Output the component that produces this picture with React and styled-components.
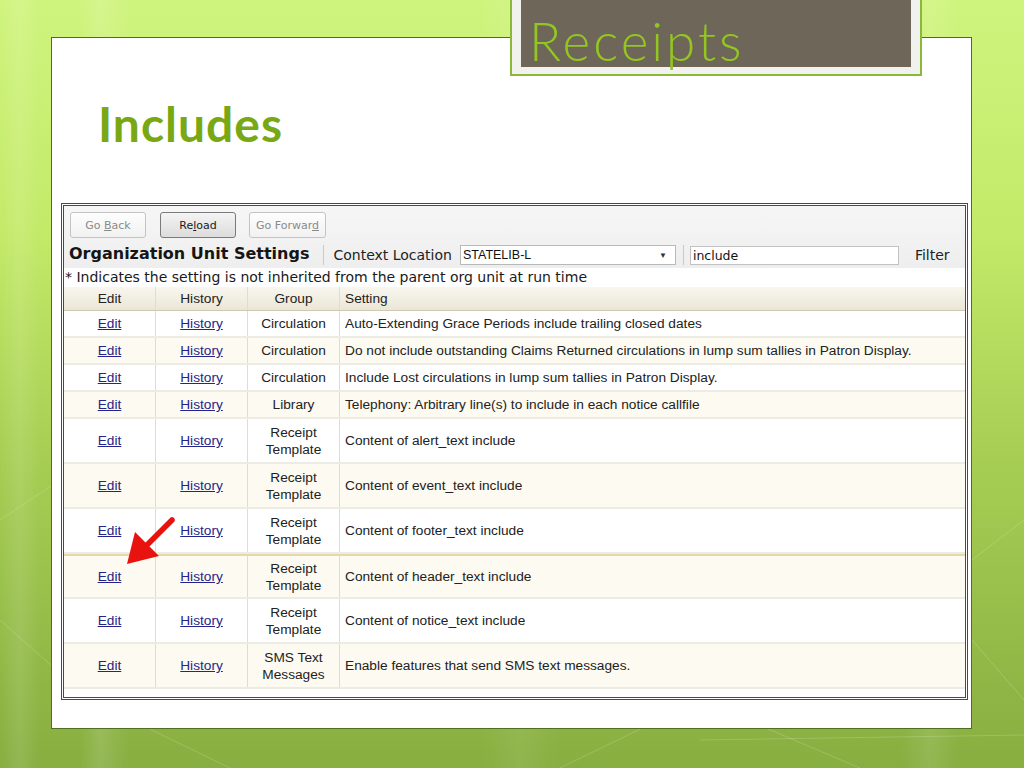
import React from "react";
import styled, { createGlobalStyle } from "styled-components";

const GlobalStyle = createGlobalStyle`
  html, body {
    margin: 0;
    padding: 0;
    overflow: hidden;
  }
  body {
    font-family: "Liberation Sans", Arial, sans-serif;
  }
`;

const Slide = styled.div`
  position: relative;
  width: 1024px;
  height: 768px;
  overflow: hidden;
  padding: 37px 0 0 51px;
  box-sizing: border-box;
  background:
    linear-gradient(90deg,
      rgba(255,255,255,0) 0px, rgba(255,255,255,0.10) 20px, rgba(255,255,255,0) 40px,
      rgba(255,255,255,0) 80px, rgba(255,255,255,0.12) 100px, rgba(255,255,255,0) 130px,
      rgba(255,255,255,0) 480px, rgba(255,255,255,0.08) 520px, rgba(255,255,255,0) 560px,
      rgba(255,255,255,0) 900px, rgba(255,255,255,0.10) 930px, rgba(255,255,255,0) 960px),
    linear-gradient(180deg, #cff47e 0%, #c3ea68 30%, #a5cc52 62%, #87ae40 100%);
`;

const Deco = styled.svg`
  position: absolute;
  left: 0;
  top: 0;
  pointer-events: none;
`;

const TitleTab = styled.div`
  position: absolute;
  left: 510px;
  top: 0;
  width: 412px;
  box-sizing: border-box;
  border: 2px solid #8cb83a;
  border-top: none;
  background: #f1f1ee;
  padding: 0 9px 7px 9px;
  z-index: 2;
`;

const TitleInner = styled.div`
  background: #6e6659;
  height: 67px;
  box-sizing: border-box;
  padding: 15px 0 0 8px;
`;

const TitleText = styled.div`
  font-family: Lato, "Open Sans", sans-serif;
  font-weight: 300;
  font-size: 53px;
  line-height: 52px;
  letter-spacing: 3px;
  color: #93c621;
  white-space: nowrap;
`;

const Panel = styled.div`
  position: relative;
  z-index: 1;
  width: 921px;
  height: 692px;
  box-sizing: border-box;
  border: 1px solid #4f6d23;
  background: #fff;
  display: flex;
  flex-direction: column;
`;

const Heading = styled.h1`
  margin: 62px 0 0 46px;
  font-family: Lato, "Open Sans", sans-serif;
  font-weight: 700;
  font-size: 48px;
  line-height: 48px;
  letter-spacing: 1px;
  color: #78a814;
`;

const Shot = styled.div`
  margin: 55px 0 0 9px;
  width: 907px;
  height: 497px;
  box-sizing: border-box;
  border: 3px double #4a4a4a;
  background: #fff;
  display: flex;
  flex-direction: column;
`;

const ToolArea = styled.div`
  background: linear-gradient(180deg, #f6f6f6, #eeeeee);
`;

const Toolbar = styled.div`
  display: flex;
  gap: 14px;
  padding: 6px 0 4px 6px;
`;

const NavButton = styled.button`
  width: ${(p) => p.$w || 76}px;
  height: 26px;
  margin: 0;
  padding: 0;
  border-radius: 3px;
  border: 1px solid ${(p) => (p.$active ? "#7a7a7a" : "#c4c4c4")};
  background: ${(p) =>
    p.$active
      ? "linear-gradient(180deg, #f4f4f4, #dcdcdc)"
      : "linear-gradient(180deg, #fdfdfd, #f1f1f1)"};
  font-family: "DejaVu Sans", Verdana, sans-serif;
  font-size: 11px;
  color: ${(p) => (p.$active ? "#1a1a1a" : "#8a8a8a")};
  u { text-decoration: underline; }
`;

const TitleRow = styled.div`
  display: flex;
  align-items: center;
  height: 26px;
  padding-left: 5px;
  font-family: "DejaVu Sans", Verdana, sans-serif;
`;

const UnitTitle = styled.span`
  font-weight: bold;
  font-size: 16px;
  color: #151515;
  margin-top: -3px;
`;

const Sep = styled.span`
  width: 1px;
  height: 20px;
  background: #c9c9c9;
  margin: 0 ${(p) => p.$r || 8}px 0 ${(p) => p.$l || 8}px;
`;

const Label = styled.span`
  font-size: 14px;
  color: #222;
`;

const SelectBox = styled.div`
  margin-left: 8px;
  width: 216px;
  height: 20px;
  box-sizing: border-box;
  border: 1px solid #b9b9b9;
  background: #fff;
  display: flex;
  align-items: center;
  justify-content: space-between;
  padding: 0 8px 0 2px;
  font-family: "Liberation Sans", Arial, sans-serif;
  font-size: 12.5px;
  color: #111;
`;

const Caret = styled.span`
  font-size: 8px;
  color: #333;
`;

const TextInput = styled.div`
  width: 209px;
  height: 19px;
  box-sizing: border-box;
  border: 1px solid #c2c2c2;
  background: #fff;
  padding-left: 2px;
  display: flex;
  align-items: center;
  font-family: "DejaVu Sans", Verdana, sans-serif;
  font-size: 12.5px;
  color: #111;
`;

const FilterLabel = styled.span`
  margin-left: 16px;
  font-size: 14px;
  color: #222;
`;

const Note = styled.div`
  height: 19px;
  line-height: 19px;
  padding-left: 1px;
  font-family: "DejaVu Sans", Verdana, sans-serif;
  font-size: 14px;
  color: #1a1a1a;
  background: #fff;
  white-space: nowrap;
`;

const Grid = styled.div`
  display: grid;
  grid-template-columns: 92px 92px 92px 1fr;
  height: ${(p) => p.$h}px;
  box-sizing: border-box;
  background: ${(p) => p.$bg};
  border-top: ${(p) => (p.$selected ? "2px solid #e6d9a6" : "none")};
  border-bottom: 2px solid #ecebe4;
  font-family: "Liberation Sans", Arial, sans-serif;
  font-size: 13.7px;
  color: #222;
`;

const HeadRow = styled(Grid)`
  background: linear-gradient(180deg, #f8f6ef, #ebe6d6);
  border-bottom: 1px solid #cfc8b2;
`;

const Cell = styled.div`
  display: flex;
  align-items: center;
  justify-content: ${(p) => (p.$left ? "flex-start" : "center")};
  text-align: ${(p) => (p.$left ? "left" : "center")};
  padding-left: ${(p) => (p.$left ? "5px" : "0")};
  border-right: ${(p) => (p.$last ? "none" : "1px solid #e2dccb")};
  line-height: 17px;
  white-space: nowrap;
`;

const Link = styled.a`
  color: #25248a;
  text-decoration: underline;
  cursor: pointer;
`;

const Arrow = styled.svg`
  position: absolute;
  left: 120px;
  top: 510px;
  z-index: 3;
`;

const rows = [
  { group: ["Circulation"], text: "Auto-Extending Grace Periods include trailing closed dates" },
  { group: ["Circulation"], text: "Do not include outstanding Claims Returned circulations in lump sum tallies in Patron Display." },
  { group: ["Circulation"], text: "Include Lost circulations in lump sum tallies in Patron Display." },
  { group: ["Library"], text: "Telephony: Arbitrary line(s) to include in each notice callfile" },
  { group: ["Receipt", "Template"], text: "Content of alert_text include" },
  { group: ["Receipt", "Template"], text: "Content of event_text include" },
  { group: ["Receipt", "Template"], text: "Content of footer_text include" },
  { group: ["Receipt", "Template"], text: "Content of header_text include", selected: true },
  { group: ["Receipt", "Template"], text: "Content of notice_text include" },
  { group: ["SMS Text", "Messages"], text: "Enable features that send SMS text messages." },
];

export default function App() {
  return (
    <>
      <GlobalStyle />
      <Slide>
        <Deco width="1024" height="768">
          <g stroke="rgba(255,255,255,0.18)" strokeWidth="1" fill="none">
            <path d="M0 520 L120 440 L250 560" />
            <path d="M0 620 L90 700 L230 768" />
            <path d="M560 768 L700 700 L860 768" />
            <path d="M972 560 L1024 520" />
            <path d="M972 640 L1024 700" />
            <path d="M700 740 L1024 735" />
          </g>
        </Deco>

        <TitleTab>
          <TitleInner>
            <TitleText>Receipts</TitleText>
          </TitleInner>
        </TitleTab>

        <Panel>
          <Heading>Includes</Heading>

          <Shot>
            <ToolArea>
              <Toolbar>
                <NavButton>Go <u>B</u>ack</NavButton>
                <NavButton $active style={{ marginRight: -1 }}>Re<u>l</u>oad</NavButton>
                <NavButton $w={77}>Go Forwar<u>d</u></NavButton>
              </Toolbar>
              <TitleRow>
                <UnitTitle>Organization Unit Settings</UnitTitle>
                <Sep $l={14} $r={9} />
                <Label>Context Location</Label>
                <SelectBox>
                  <span>STATELIB-L</span>
                  <Caret>▼</Caret>
                </SelectBox>
                <Sep $l={7} $r={6} />
                <TextInput>include</TextInput>
                <FilterLabel>Filter</FilterLabel>
              </TitleRow>
            </ToolArea>

            <Note>* Indicates the setting is not inherited from the parent org unit at run time</Note>

            <HeadRow $h={24}>
              <Cell>Edit</Cell>
              <Cell>History</Cell>
              <Cell>Group</Cell>
              <Cell $left $last>Setting</Cell>
            </HeadRow>

            {rows.map((r, i) => (
              <Grid
                key={i}
                $h={r.group.length > 1 ? 45 : 27}
                $bg={i % 2 === 0 ? "#ffffff" : "#fcfaf1"}
                $selected={r.selected}
              >
                <Cell><Link>Edit</Link></Cell>
                <Cell><Link>History</Link></Cell>
                <Cell>
                  <span>
                    {r.group.map((g, j) => (
                      <div key={j}>{g}</div>
                    ))}
                  </span>
                </Cell>
                <Cell $left $last>{r.text}</Cell>
              </Grid>
            ))}
          </Shot>
        </Panel>

        <Arrow width="60" height="60" viewBox="0 0 60 60">
          <line x1="52" y1="10" x2="26" y2="36" stroke="#e8120f" strokeWidth="5.5" strokeLinecap="round" />
          <polygon points="7,54 15,22 39,46" fill="#e8120f" />
        </Arrow>
      </Slide>
    </>
  );
}
